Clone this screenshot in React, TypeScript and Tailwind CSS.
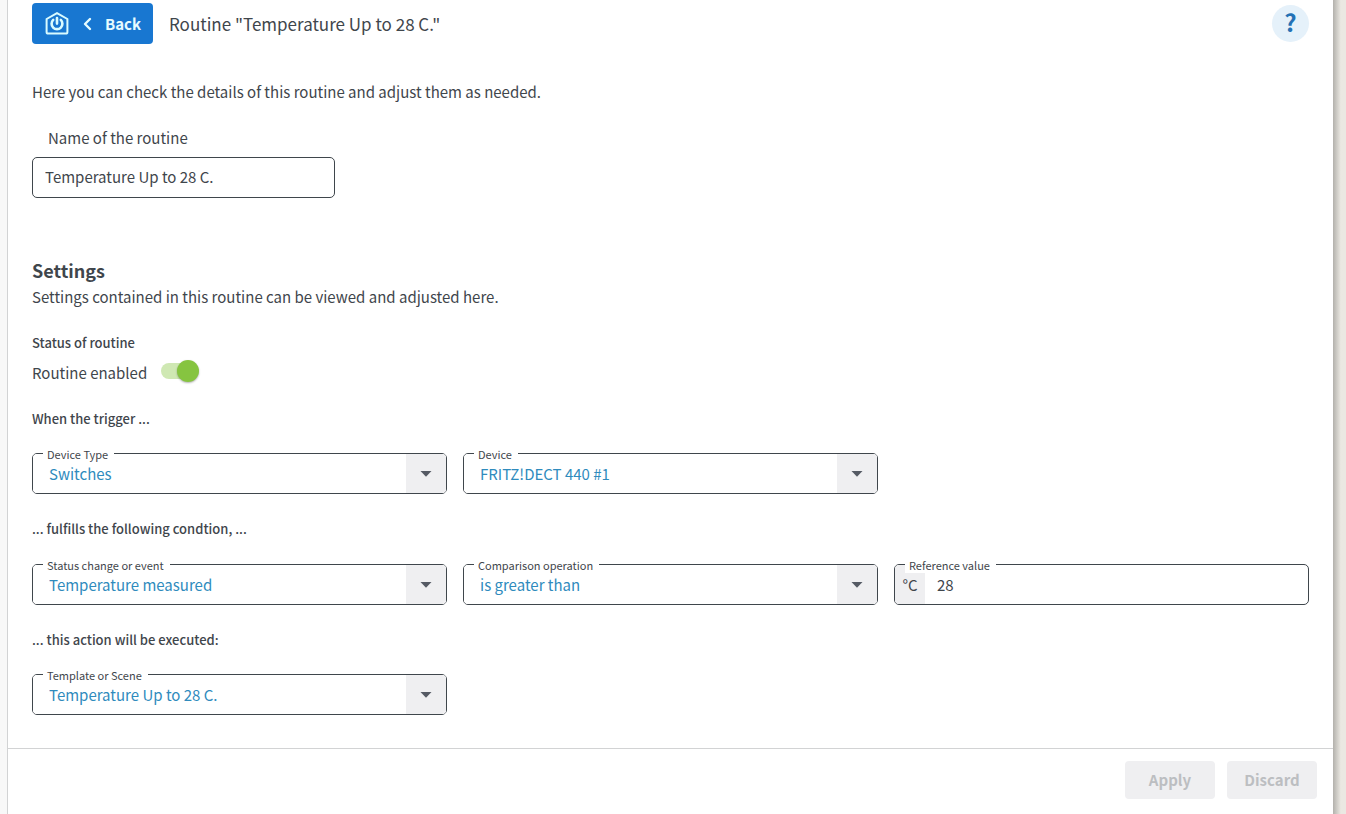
import { useState, type ReactNode } from 'react';

function Field({ id, label, children }: { id: string; label: string; children: ReactNode }) {
  return (
    <div className="relative flex h-[41px] rounded-[5px] border border-[#3f464c]">
      {children}
      <label
        htmlFor={id}
        className="absolute -top-2 left-2.5 bg-white pr-1.5 pl-1 text-[11px] leading-4 text-[#3f464c]"
      >
        {label}
      </label>
    </div>
  );
}

function SelectField({ id, label, value }: { id: string; label: string; value: string }) {
  return (
    <Field id={id} label={label}>
      <select
        id={id}
        defaultValue={value}
        className="w-full cursor-pointer appearance-none rounded bg-white pr-12 pl-4 text-[15px] text-[#2f8bbd] outline-none"
      >
        <option>{value}</option>
      </select>
      <span className="pointer-events-none absolute inset-y-0 right-0 flex w-10 items-center justify-center rounded-r bg-[#efeff1]">
        <svg width="12" height="6" viewBox="0 0 12 6" aria-hidden="true">
          <path d="M0.5 0h11L6 5.8z" fill="#555a64" />
        </svg>
      </span>
    </Field>
  );
}

function SmartHomeIcon() {
  return (
    <svg width="24" height="24" viewBox="0 0 24 24" fill="none" stroke="#d9fbff" aria-hidden="true">
      <path d="M1.6 7 12 1.1 22.4 7v13c0 1-.6 1.6-1.6 1.6H3.2c-1 0-1.6-.6-1.6-1.6z" strokeWidth="2" strokeLinejoin="round" />
      <path d="M8.2 7.9a5.4 5.4 0 1 0 7.6 0M12 6v5.6" strokeWidth="2.6" strokeLinecap="round" />
    </svg>
  );
}

export default function App() {
  const [enabled, setEnabled] = useState(true);
  const [name, setName] = useState('Temperature Up to 28 C.');
  const [reference, setReference] = useState('28');

  return (
    <div className="flex min-h-screen bg-[#ebe8e2] font-['Noto_Sans_CJK_SC','Noto_Sans',sans-serif] text-[15px] leading-6 text-[#3f464c]">
      <div className="w-[7px] shrink-0 bg-[#f8f8f8]" />
      <div className="flex min-w-0 flex-1 flex-col border-l border-[#d2d3d4] bg-white">
        <main className="px-6 pt-[3px] pb-[33px]">
          <header className="flex items-center">
            <button
              type="button"
              className="flex h-[41px] w-[121px] items-center rounded bg-[#1877d1] pl-[13px] font-bold text-[#e6fcff]"
            >
              <SmartHomeIcon />
              <svg width="10" height="14" viewBox="0 0 10 14" fill="none" className="ml-3.5" aria-hidden="true">
                <path d="M7 2 2 7l5 5" stroke="#e6fcff" strokeWidth="2.4" strokeLinecap="round" strokeLinejoin="round" />
              </svg>
              <span className="ml-3">Back</span>
            </button>
            <h1 className="ml-4 text-[17px]">Routine "Temperature Up to 28 C."</h1>
            <button
              type="button"
              aria-label="Help"
              className="ml-auto flex size-[37px] items-center justify-center rounded-full bg-[#e5f1fa] pb-1 text-[24px] font-bold text-[#2471b5]"
            >
              ?
            </button>
          </header>

          <p className="mt-9">Here you can check the details of this routine and adjust them as needed.</p>

          <div className="mt-[22px] flex flex-col items-start gap-[7px]">
            <label htmlFor="routine-name" className="ml-4">
              Name of the routine
            </label>
            <input
              id="routine-name"
              type="text"
              value={name}
              onChange={(e) => setName(e.target.value)}
              className="h-[41px] w-[303px] rounded-[5px] border border-[#3f464c] px-3 pb-0.5 outline-none"
            />
          </div>

          <h2 className="mt-[58px] text-[18px] leading-7 font-bold">Settings</h2>
          <p className="mt-px">Settings contained in this routine can be viewed and adjusted here.</p>

          <h3 className="mt-6 text-[13px] leading-5 font-medium">Status of routine</h3>
          <label className="mt-2 flex w-fit items-center gap-3.5">
            Routine enabled
            <span className="relative mb-1 flex h-5 w-[39px] items-center">
              <input
                type="checkbox"
                role="switch"
                checked={enabled}
                onChange={(e) => setEnabled(e.target.checked)}
                className="peer h-4 w-9 cursor-pointer appearance-none rounded-full bg-[#d5d7d9] checked:bg-[#cfe8b3]"
              />
              <span className="pointer-events-none absolute -top-px left-0 size-[22px] rounded-full bg-[#9aa0a5] shadow-[0_1px_2px_rgba(0,0,0,0.3)] peer-checked:left-4 peer-checked:bg-[#86c440]" />
            </span>
          </label>

          <h3 className="mt-6 text-[13px] leading-5 font-medium">When the trigger ...</h3>
          <div className="mt-6 grid grid-cols-3 gap-4">
            <SelectField id="device-type" label="Device Type" value="Switches" />
            <SelectField id="device" label="Device" value="FRITZ!DECT 440 #1" />
          </div>

          <h3 className="mt-[25px] text-[13px] leading-5 font-medium">... fulfills the following condtion, ...</h3>
          <div className="mt-[25px] grid grid-cols-3 gap-4">
            <SelectField id="event" label="Status change or event" value="Temperature measured" />
            <SelectField id="comparison" label="Comparison operation" value="is greater than" />
            <Field id="reference" label="Reference value">
              <span className="flex w-[30px] shrink-0 items-center justify-center rounded-l bg-[#efeff1]">°C</span>
              <input
                id="reference"
                type="text"
                value={reference}
                onChange={(e) => setReference(e.target.value)}
                className="min-w-0 flex-1 rounded-r px-3 outline-none"
              />
            </Field>
          </div>

          <h3 className="mt-[25px] text-[13px] leading-5 font-medium">... this action will be executed:</h3>
          <div className="mt-6 grid grid-cols-3 gap-4">
            <SelectField id="template" label="Template or Scene" value="Temperature Up to 28 C." />
          </div>
        </main>

        <footer className="flex flex-1 items-start justify-end gap-3 border-t border-[#d2d3d4] px-4 pt-3">
          <button type="button" disabled className="h-[38px] w-[90px] rounded bg-[#efeff1] font-bold text-[#bcbec1]">
            Apply
          </button>
          <button type="button" disabled className="h-[38px] w-[90px] rounded bg-[#efeff1] font-bold text-[#bcbec1]">
            Discard
          </button>
        </footer>
      </div>
      <div className="w-[13px] shrink-0 bg-linear-to-r from-[#b3b1ac] to-[#ebe8e2] to-60%" />
    </div>
  );
}
